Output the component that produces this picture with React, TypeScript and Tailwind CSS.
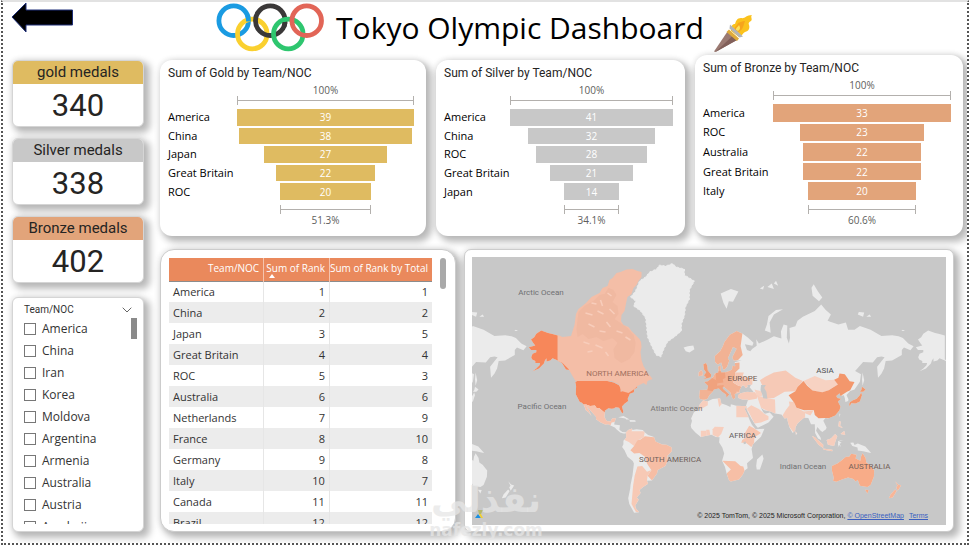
import React from "react";

const DIN = "font-[Roboto,'Liberation_Sans',sans-serif]";
const SEGOE = "font-['Open_Sans','Noto_Sans',sans-serif]";
const CARD_SHADOW = "shadow-[4px_4px_7px_2px_rgba(0,0,0,0.27),-1px_-1px_5px_1px_rgba(0,0,0,0.05)]";

/* ---------- Header artwork ---------- */

function Rings() {
  const ring = (cx: number, cy: number, stroke: string) => (
    <circle cx={cx} cy={cy} r="14.8" fill="none" stroke={stroke} strokeWidth="4.8" />
  );
  return (
    <svg className="h-[50px] w-[109px] shrink-0" viewBox="216 3 109 50" aria-label="Olympic rings" role="img">
      {ring(233.7, 21.7, "#1a9be2")}
      {ring(252.3, 35, "#fad02f")}
      {ring(270.3, 21.7, "#3a3838")}
      {ring(288.3, 35, "#2ec66f")}
      {ring(306.7, 21.7, "#e26557")}
      <path d="M247.500 16.500a14.800 14.800 0 0 1 1 6" fill="none" stroke="#1a9be2" strokeWidth="4.8" />
      <path d="M284 27.300a14.800 14.800 0 0 0 1 -4" fill="none" stroke="#3a3838" strokeWidth="4.8" />
    </svg>
  );
}

function Torch() {
  return (
    <svg className="h-[40px] w-[42px] shrink-0" viewBox="712 13 42 40" aria-label="Torch" role="img">
      <path
        d="M731 31c0-5 1-7 4-7 1-3 2-6 6-6 4 1 5-3 11-3-2 2 1 4-1 6-2 1-3 2-2 4 1 3 0 6-4 7-2 1-3 4-6 5z"
        fill="#fbc21d"
      />
      <path d="M734 30c1-4 3-4 4-7 3-1 4-2 7-2-1 2-1 4-2 6-1 3-3 4-5 5z" fill="#f6a51c" />
      <path d="M736 30c0-3 2-3 3-5 1 2 2 4-1 6z" fill="#fde35c" />
      <path d="M727.500 31.500 737 40 715.500 52 714 51.500z" fill="#9b7a72" />
      <path d="M732.500 36 737 40 715.500 52z" fill="#82605a" />
      <path d="M729 29.500 739 38.500 737 41 726.500 32z" fill="#e0ab3a" />
      <path d="M730 24.500 743 36.500 739.500 37.500 729.500 28.500z" fill="#b2b5b8" />
    </svg>
  );
}

/* ---------- KPI cards ---------- */

function Kpi({ label, value, tone }: { label: string; value: string; tone: string }) {
  return (
    <section className={`overflow-hidden rounded-[6px] border border-[#d5d5d5] bg-white text-center text-[#252423] ${CARD_SHADOW} ${DIN}`}>
      <h2 className={`h-[23px] text-[15px] leading-[22px] ${tone}`}>{label}</h2>
      <p className="h-[42px] text-[31px] leading-[44px]">{value}</p>
    </section>
  );
}

/* ---------- Slicer ---------- */

const TEAMS = ["America", "China", "Iran", "Korea", "Moldova", "Argentina", "Armenia", "Australia", "Austria", "Azerbaijan"];

function Slicer() {
  return (
    <section className={`flex min-h-0 flex-1 flex-col rounded-[6px] border border-[#d5d5d5] bg-white pb-[7px] pl-[11px] pr-[6px] pt-[4px] ${CARD_SHADOW}`}>
      <div className="flex h-[16px] items-center justify-between pr-[5px]">
        <h2 className={`text-[10px] leading-[16px] text-[#333] ${DIN}`}>Team/NOC</h2>
        <button type="button" aria-label="Slicer type" className="flex h-[12px] w-[10px] items-center">
          <svg viewBox="0 0 10 6" className="h-[6px] w-[10px]">
            <path d="M.7.7 5 5 9.300.7" fill="none" stroke="#555" strokeWidth="0.9" />
          </svg>
        </button>
      </div>
      <div className="flex min-h-0 flex-1 justify-between overflow-hidden">
        <ul className={`text-[12px] text-[#333] ${SEGOE}`}>
          {TEAMS.map((t) => (
            <li key={t} className="h-[22px]">
              <label className="flex h-[22px] items-center gap-[6px]">
                <input type="checkbox" className="h-[12px] w-[12px] appearance-none border border-[#777] bg-white checked:bg-[#555]" />
                {t}
              </label>
            </li>
          ))}
        </ul>
        <div className="h-[21px] w-[6px] bg-[#8a8a8a]" />
      </div>
    </section>
  );
}

/* ---------- Funnels ---------- */

type FunnelProps = {
  title: string;
  rows: [string, number][];
  last: string;
  bar: string;
  labels: string;
  body: string;
};

function Bracket({ width }: { width: number }) {
  return (
    <div className="mx-auto flex h-[9px] items-center border-x border-[#b3b0ad]" style={{ width: `${width}%` }}>
      <div className="h-px flex-1 bg-[#b3b0ad]" />
    </div>
  );
}

function Funnel({ title, rows, last, bar, labels, body }: FunnelProps) {
  const max = rows[0][1];
  const end = (rows[rows.length - 1][1] / max) * 100;
  return (
    <section className={`rounded-[12px] bg-white pb-[9px] pl-[8px] pr-[12px] pt-[5px] ${CARD_SHADOW}`}>
      <h2 className={`h-[16px] whitespace-nowrap text-[12px] leading-[16px] text-[#252423] ${DIN}`}>{title}</h2>
      <div className={`mt-[4px] flex text-[11px] ${SEGOE}`}>
        <ul className={`mt-[24px] flex shrink-0 flex-col gap-[2px] whitespace-nowrap text-black ${labels} ${body}`}>
          {rows.map(([name]) => (
            <li key={name} className="flex flex-1 items-center leading-[14px]">
              {name}
            </li>
          ))}
        </ul>
        <div className="min-w-0 flex-1 text-center text-[10px]">
          <p className="h-[11px] leading-[11px] text-[#605e5c]">100%</p>
          <Bracket width={100} />
          <ul className={`mt-[4px] flex flex-col gap-[2px] text-white ${body}`}>
            {rows.map(([name, v]) => (
              <li key={name} className={`mx-auto flex flex-1 items-center justify-center leading-[14px] ${bar}`} style={{ width: `${(v / max) * 100}%` }}>
                {v}
              </li>
            ))}
          </ul>
          <div className="h-[5px]" />
          <Bracket width={end} />
          <p className="h-[13px] leading-[13px] text-[#605e5c]">{last}</p>
        </div>
      </div>
    </section>
  );
}

/* ---------- Rank table ---------- */

const RANKS: [string, number, number][] = [
  ["America", 1, 1],
  ["China", 2, 2],
  ["Japan", 3, 5],
  ["Great Britain", 4, 4],
  ["ROC", 5, 3],
  ["Australia", 6, 6],
  ["Netherlands", 7, 9],
  ["France", 8, 10],
  ["Germany", 9, 8],
  ["Italy", 10, 7],
  ["Canada", 11, 11],
  ["Brazil", 12, 12],
];

function RankTable() {
  return (
    <section className={`flex min-h-0 justify-between overflow-hidden rounded-[14px] border border-[#ccc] bg-white pb-[7px] pl-[8px] pr-[9px] pt-[8px] ${CARD_SHADOW}`}>
      <div className="min-h-0 flex-1 overflow-hidden">
        <table className={`w-full table-fixed border-collapse text-[#333] ${SEGOE}`}>
          <colgroup>
            <col className="w-[36%]" />
            <col className="w-[25%]" />
            <col className="w-[39%]" />
          </colgroup>
          <thead>
            <tr className="h-[23px] border-b border-[#8c8c8c] bg-[#ea895c] text-right align-top text-[10px] text-white">
              <th scope="col" className="whitespace-nowrap border-r border-[#f5c4ad] pr-[4px] pt-[3px] font-medium leading-[14px]">Team/NOC</th>
              <th scope="col" className="relative whitespace-nowrap border-r border-[#f5c4ad] pr-[4px] pt-[3px] font-medium leading-[14px]">
                Sum of Rank
                <span className="absolute bottom-[3px] left-[5px] h-0 w-0 border-x-[3px] border-b-[4px] border-x-transparent border-b-white" />
              </th>
              <th scope="col" className="whitespace-nowrap pr-[4px] pt-[3px] font-medium leading-[14px]">Sum of Rank by Total</th>
            </tr>
          </thead>
          <tbody className="text-[11px] leading-[15px]">
            {RANKS.map(([team, rank, total], i) => (
              <tr key={team} className={`h-[21px] ${i % 2 ? "bg-[#ececec]" : "bg-white"}`}>
                <td className="border-r border-[#e6e6e6] pl-[4px]">{team}</td>
                <td className="border-r border-[#e6e6e6] pr-[4px] text-right">{rank}</td>
                <td className="pr-[4px] text-right">{total}</td>
              </tr>
            ))}
          </tbody>
        </table>
      </div>
      <div className="ml-[8px] h-[31px] w-[6px] shrink-0 rounded-full bg-[#a9a9a9]" />
    </section>
  );
}

/* ---------- World map (Web Mercator) ---------- */

const SCALE = 1.075;
const WORLD = 387;

const project = (lon: number, lat: number): string => {
  const y = Math.log(Math.tan(Math.PI / 4 + (lat * Math.PI) / 360)) * 61.6;
  return `${(709.9 + lon * SCALE).toFixed(1)} ${(441.6 - y).toFixed(1)}`;
};

const shape = (pts: number[]): string => {
  const out: string[] = [];
  for (let i = 0; i < pts.length; i += 2) out.push(project(pts[i], pts[i + 1]));
  return `M${out.join("L")}Z`;
};

const ALASKA = [-141, 69.7, -146, 70.2, -150, 70.5, -156.5, 71.3, -161, 70.3, -163, 69.2, -166, 68.4, -163.5, 67, -162, 66.3, -168, 65.6, -166, 64.5, -161, 64.5, -161, 63.6, -164.5, 63, -165.8, 61.5, -164.8, 60.4, -162, 59.8, -162, 58.8, -157.5, 58.8, -158, 57.7, -161, 56, -164.5, 54.6, -158.5, 56, -154, 58.5, -153, 60, -151.5, 61, -151.5, 59.5, -148, 60, -146, 61, -141, 60, -137, 58.7, -133.5, 55.5, -131, 55.2, -130, 56, -133.5, 58.5, -137, 59.6, -141, 60.4];

const USA = [-124.7, 48.4, -123, 49, -95, 49, -89, 48, -84.5, 46.5, -82.5, 45.3, -82.5, 42, -79, 43, -76, 44.5, -71.5, 45, -69, 47.3, -67, 45, -70, 43.5, -70.2, 41.7, -74, 40.6, -76, 37, -75.5, 35.2, -79, 33.2, -81.3, 31, -80, 26.5, -81, 25.2, -82.8, 28, -84, 30, -87, 30.4, -89.2, 29.5, -91, 29.2, -94, 29.6, -97.3, 27.5, -97.2, 25.9, -99.5, 27.5, -102.5, 29.7, -104.7, 29.6, -106.5, 31.8, -111, 31.3, -114.7, 32.6, -117.1, 32.5, -118.5, 34, -120.6, 34.6, -122.5, 37.5, -124.3, 40.3, -124, 46];

const MEXICO = [-117.1, 32.5, -114.7, 32.6, -111, 31.3, -106.5, 31.8, -104.7, 29.6, -102.5, 29.7, -99.5, 27.5, -97.2, 25.9, -97.7, 22.3, -95.5, 18.7, -92, 18.5, -90.5, 21, -87, 21.3, -88.2, 18, -91, 17.5, -92, 14.8, -94, 16, -97, 15.8, -101.5, 17.7, -105.5, 20.3, -105.5, 22.5, -109, 26, -112.8, 30, -114.7, 31.7, -112, 27.5, -109.7, 23.2, -112.2, 26, -115, 28, -116, 30.5];

const CENTRAL = [-91, 17.5, -88.2, 17.8, -88.6, 15.8, -83.3, 15, -83.7, 11, -81, 8.9, -77.5, 8.7, -78, 7.5, -80, 7.5, -83, 8.3, -86, 11, -88, 13, -92, 14.8];

const EURASIA = [-9, 37, -9.5, 38.7, -8.8, 43.2, -1.8, 43.4, -1.2, 46, -4.7, 48.4, -1.5, 48.7, 1.5, 50.2, 4, 51.8, 5, 53.3, 8.5, 54, 8.2, 57, 10.5, 57.6, 10.5, 55, 11, 54, 14, 54, 18.5, 54.7, 21, 55.5, 21.5, 57.5, 24, 57.2, 23.5, 59.2, 30, 60, 22.5, 60, 21.3, 61.5, 25.3, 65, 22, 65.7, 17.2, 61, 18.5, 60, 16.5, 57, 14.3, 55.5, 12.8, 55.5, 11, 59, 8, 58.1, 5.3, 59, 5, 62, 10, 64, 12.5, 66, 14, 67.5, 19, 70, 25.5, 71.1, 31, 70.3, 36, 69, 41, 67.3, 40, 66.2, 33, 66.7, 35, 64.5, 38, 64, 40, 65, 44, 66.2, 43.5, 68.5, 46, 67, 54, 68.3, 60, 69.5, 67, 68.8, 66.5, 71, 69, 73, 72.5, 72.7, 72, 69, 74, 67, 75, 69, 74.5, 72, 80, 72.5, 82, 74, 87, 75, 98, 76.3, 104, 77.7, 108, 76.6, 113, 75.5, 110, 74, 113, 73.7, 120, 73, 127, 73.5, 129, 71.5, 135, 71.5, 140, 72.6, 150, 71.5, 160, 69.6, 170, 69.8, 176, 69.5, 180, 68.9, 185, 67, 190, 66, 187, 64.4, 181, 65.5, 179, 64.5, 179, 62.5, 170, 60, 164, 59.8, 162.5, 56, 160, 53.2, 156.8, 51, 156, 57, 163, 61.5, 160, 61.8, 156, 61.5, 152, 59, 143, 59.3, 135.5, 54.7, 141, 53, 140, 48.5, 135, 43.5, 131, 42.5, 127.5, 39.8, 129.4, 36.5, 129, 35.2, 126.5, 34.5, 126, 37.5, 125, 39.5, 122, 39, 121, 41, 118, 39, 119, 37.5, 122.5, 37, 119.5, 35, 122, 31, 121, 28, 117, 23.5, 110.5, 21, 108, 21.5, 106, 19, 109, 13, 108.5, 11.5, 105, 8.8, 103, 10.5, 100.5, 13.5, 99.3, 10, 103.3, 4, 104, 1.4, 101, 2.8, 98.3, 8, 98, 16, 94.5, 16, 92, 21.5, 88, 21.7, 85.5, 19.8, 82, 16.5, 80, 13, 79.8, 10.3, 77.5, 8.1, 74.5, 13, 72.7, 19, 72.5, 21.5, 70, 21, 67, 24.5, 61, 25.2, 57, 27, 51, 28, 48, 30, 50, 26.5, 51.5, 25, 56.2, 26, 59.7, 22.5, 55, 17.5, 45, 12.8, 43, 15, 39, 21, 35, 28, 34, 31.3, 36, 36.5, 30.5, 36.5, 27, 37.5, 26.5, 39.5, 29, 41, 35, 42, 41.5, 41.5, 37.5, 45, 39, 47, 35, 46.3, 35.5, 45.2, 33.5, 44.5, 32.5, 46, 30.5, 46.2, 28, 43, 28, 41.5, 23.5, 40.5, 24, 38, 22.7, 36.5, 21, 38, 19.5, 41.5, 14, 45, 12.5, 45.3, 12.5, 44, 16, 41.7, 18.4, 40, 17, 39, 16, 38, 15.6, 40, 12, 42, 8.8, 44.4, 4, 43.5, 3.1, 42, 0, 39.5, -2, 36.8, -5.5, 36];

const AFRICA = [-5.9, 35.8, -2, 35, 3, 36.8, 10, 37.3, 11, 34, 10.5, 33.5, 15.5, 32.3, 19.5, 30.5, 20, 32.8, 25, 31.6, 31, 31.5, 34, 31.3, 33, 28.5, 35.5, 24, 37.2, 20, 39.5, 15.5, 43, 11.5, 51.2, 11.8, 48, 4.5, 40.5, -2.5, 39.3, -7, 40.6, -15, 35, -19.8, 35.5, -24, 32.8, -26, 31, -29.5, 27.5, -33.2, 20, -34.8, 18.3, -34, 16, -28.5, 14.5, -23, 11.8, -17.5, 13.8, -11, 12, -5.5, 9, -0.8, 9.5, 4, 6, 4.3, 2, 6.3, -4, 5.2, -8, 4.4, -13, 8.5, -16.8, 12.5, -17.4, 14.7, -16.2, 19, -17, 21, -14.5, 26, -10, 29.5, -9.5, 32];

const SOUTH_AMERICA = [-77.5, 8.7, -75.5, 10.8, -72, 12.2, -71.5, 10.8, -68, 11.5, -62, 10.7, -60, 8.5, -57, 6, -51.5, 4.3, -50, 0, -44, -2.7, -40, -2.9, -35.3, -5.2, -35, -9, -39, -13, -39, -18, -41, -22, -48, -25.5, -48.7, -28.5, -53.5, -34, -58, -34.2, -57, -36.5, -62, -39, -65, -41, -64, -43, -67.5, -46, -65.8, -47.5, -69, -51, -68.5, -52.5, -65.3, -54.8, -70, -55, -74.5, -50, -75.5, -46.5, -73.7, -40, -73.3, -37, -71.5, -30, -70.2, -20, -71.3, -17.7, -76.2, -14, -79, -8, -81.2, -5, -80, -2.5, -80, 0.8, -77.5, 3.5];

const AUSTRALIA = [114, -22, 114, -26, 115.7, -32, 115, -34.2, 118, -35, 124, -33, 129, -31.6, 134, -32.8, 136, -34.8, 138, -33.5, 140, -38, 144, -38.5, 147, -38.8, 150, -37.3, 153, -31, 153.3, -26, 149, -21, 146, -19, 145.3, -15, 142.5, -10.8, 141, -14, 140.5, -17.5, 136, -15.5, 136.8, -12.2, 132, -11.3, 130, -14, 127, -14, 122, -18, 119, -20];
const TASMANIA = [144.7, -40.8, 148.2, -40.9, 147, -43.5];
const NZ_NORTH = [172.8, -34.5, 175.5, -37, 178.4, -37.7, 175.2, -41.5, 173.8, -39.3, 175, -38];
const NZ_SOUTH = [172.7, -40.6, 174.2, -41.7, 170.5, -46, 167, -46.5, 168.5, -44];
const SUMATRA = [95.3, 5.5, 98, 4, 106, -3, 105.8, -5.9, 101.5, -3];
const JAVA = [105.3, -6.5, 114.5, -7.6, 114.3, -8.9, 106.5, -7.6];
const BORNEO = [109, 1.5, 113, 3, 117, 7, 119, 5, 117.5, 1, 116, -4, 110.2, -3];
const SULAWESI = [119.5, -5.5, 119.8, 0.5, 125, 1.5, 120.5, 0, 123, -1, 121, -2, 122.5, -5, 120.5, -3];
const NEW_GUINEA = [131, -1, 134, -0.8, 135, -3.3, 138, -1.7, 145, -4.5, 150.5, -10.5, 147, -9.8, 143, -9, 138, -8.3, 137.8, -5.5, 133, -4];
const LUZON = [120.5, 18.5, 122.2, 18.3, 121.7, 14.5, 124, 13, 123, 12.8, 120, 14.2];
const MINDANAO = [122, 7, 126.3, 6, 125.5, 9.8, 123.5, 8.5];
const HONSHU = [130, 33, 130.5, 31, 132, 33.5, 136, 33.3, 140, 35, 141.2, 38, 142, 39.5, 141.2, 41.4, 139.8, 39.5, 137, 37, 133, 35.6, 130.8, 34.4];
const HOKKAIDO = [140, 42, 143.2, 42, 145.3, 43.5, 142, 45.4, 141.3, 43.3];
const BRITAIN = [-5.5, 50, 1.3, 51.2, 1.7, 52.8, -1.5, 55, -2, 57.5, -3.2, 58.8, -5.7, 58.2, -5, 55.5, -3, 54, -4.5, 53, -5, 51.8, -3, 51.3];
const IRELAND = [-10, 51.8, -6.3, 52.2, -6, 54, -7.5, 55.2, -10, 54];

const ISLANDS: number[][] = [
  TASMANIA, NZ_NORTH, NZ_SOUTH, SUMATRA, JAVA, BORNEO, SULAWESI, NEW_GUINEA, LUZON, MINDANAO, HONSHU, HOKKAIDO, BRITAIN, IRELAND,
  [49.3, -12, 50.4, -15.8, 47, -25, 44, -25, 43.5, -22, 44.3, -16.5],
  [80, 9.5, 81.8, 7.5, 80.5, 6],
  [121, 25.2, 121.9, 24.8, 120.7, 22],
  [142.5, 54, 144, 49.5, 142.5, 46, 142, 50],
  [51.5, 71.3, 57, 70.6, 56, 73.5, 60, 75.5, 68.5, 76.7, 62, 76.5, 55, 75.2, 53.5, 73],
  [10.5, 79.7, 13, 78, 16, 76.8, 18, 78.3, 22, 78.2, 27, 80, 20, 80.4],
  [96, 79.3, 95, 80.6, 97, 81.1, 101, 80, 105, 79, 102, 78.3],
  [47, 80.5, 50, 80.3, 51, 80.9],
  [54, 80.7, 60, 80.4, 58, 81.2],
  [60, 81.2, 64, 80.9, 62, 81.6],
  [138, 75.5, 143, 75, 144, 76, 139, 76.1],
  [146, 75, 150.5, 75, 149, 75.5],
  [178.5, 71.1, 182, 71.1, 180, 71.5],
  [-24, 65.5, -22, 64, -18.5, 63.5, -14, 64.8, -15, 66.3, -20, 66],
  [-84.8, 22, -80, 23.1, -74.2, 20.2, -77.5, 20, -78, 21],
  [-74.3, 19.8, -69, 19.5, -68.5, 18.2, -74, 18.2],
];

const LAND = [ALASKA, USA, MEXICO, CENTRAL, EURASIA, AFRICA, SOUTH_AMERICA, AUSTRALIA, ...ISLANDS].map(shape).join("");
const CASPIAN = shape([48, 46.5, 52.5, 46.5, 51, 44.5, 53, 42, 54, 37, 50, 37.3, 49, 40.5, 47.5, 43]);
const VICTORIA = shape([31.7, -0.5, 34, 0, 34, -2, 32, -2.5]);

const CANADA =
  "M558.3 335L563 337 571.500 336 575 325 576.500 314 579 309 586.500 303 592 297 600 293 603 288 608 286 610 280 613 278 617 273 621 272 627 269.500 633 269 638 271 642 272 642 277 639 281 637 285 634 288 632 294 628 297 627 301 626 306 625 311 622 315 621.500 321 624 325 629 327 632 331 636 335 640 339 641.500 342 642 347 641 352 642 360 644 366 647 371 653 379 648 381 647 385 644 383 638 386 635 389 629 393 622 391 619 384 612 381 576 381 573 376 569 369 563 363 558.300 361Z";
const GREENLAND =
  "M631 297L636 291 640 281 646 277 650 272 657 269 660 265 666 266 673 263.500 677 267 685 269 685 275 695 281 690 290 690 299 686 307 685 316 682 324 682 331 675 337 668 342 664 350 661.500 357 656.500 355 652 346 648 337 647 327 646 318 641 311 634 306 636 301Z";

/* Countries shaded by medals; coarse borders, trimmed to the coastline. */
const SHADED: [string, number[]][] = [
  ["#f2b294", [-12, 35.8, -12, 44.5, -6, 49.5, 2, 51.5, 6, 58, 3, 63, 12, 69, 24, 73, 31, 71, 29, 66, 31, 62.5, 27, 60.3, 20, 58.5, 28, 59, 28, 56, 24, 54, 24, 50.5, 22, 48, 27, 46, 30, 45.5, 28, 41, 25, 35, 14, 36, 8, 43, -1, 36]],
  ["#f6c9b6", [24, 54, 32, 54, 31, 52, 40, 50, 40, 47, 33, 44, 29, 45.5, 27, 46, 22, 48, 24, 50.5]],
  ["#f0a27e", [6, 54.8, 14.5, 54.5, 15, 51, 12.5, 50, 13, 48, 7.5, 47.6, 6, 50]],
  ["#f0a27e", [-2, 43, -5, 48.8, 2, 51, 8, 49, 7, 46, 7.5, 43.8, 3, 42.4]],
  ["#f0a27e", [7, 46, 13.5, 46.5, 12.5, 44.5, 19, 40, 16, 37.5, 10, 42, 7.5, 43.8]],
  ["#f6cbb9", [25, 42, 42, 41.8, 44.8, 39.5, 44, 37, 36, 35.8, 26, 36]],
  ["#f7d2c2", [42, 43.5, 50, 42, 48.5, 38.5, 44, 39]],
  ["#f6c9b6", [47, 49.5, 52, 51.5, 60, 54, 71, 55, 80, 51, 87, 49, 82, 45.3, 80, 42.3, 70, 42, 60, 37.5, 53, 37, 50, 45]],
  ["#f7cebd", [44, 39.5, 48, 38.5, 54, 37.3, 61, 36.5, 61.5, 25, 56, 26.5, 48, 30]],
  ["#f7cebd", [35, 29.5, 39, 32, 46, 29, 51, 25, 55, 23, 55, 20, 48, 17.5, 42, 16.5]],
  ["#f6cdbb", [68, 23.5, 71, 28, 74.5, 32, 74, 35, 79, 34.5, 81, 30, 88, 27, 97, 28, 94, 23.5, 89, 25.5, 89, 21, 80, 6, 71, 18]],
  ["#f7d2c2", [87.5, 49, 98, 52, 108, 49.5, 116, 49.8, 119.5, 46.8, 111, 43, 105, 41.7, 96, 42.8]],
  ["#f3976c", [73.7, 39.5, 80, 42.3, 82, 45.3, 87.5, 49, 91, 46, 96, 42.8, 105, 41.7, 111, 43, 119.5, 46.8, 116, 49.8, 120, 51, 121, 53.4, 126, 53, 130.5, 48.8, 135, 48.4, 131, 43, 128, 42, 123, 39.5, 123, 30, 117, 20, 108, 21.5, 101.5, 21.2, 98, 24, 97, 28.2, 88, 28, 81, 30, 79, 34]],
  ["#f7cebd", [25, 32, 34.5, 31.5, 37, 22, 25, 22]],
  ["#f7cebd", [-10, 29, -10, 34, -5.5, 36.5, -1.5, 35.3, -1.5, 32, -8.5, 28.7]],
  ["#f7cebd", [7.5, 37.5, 11.5, 37.5, 11.5, 33, 9, 30.5]],
  ["#f7cebd", [3, 6, 3, 11.5, 5, 13.7, 13.5, 13.5, 11, 7, 8, 4]],
  ["#f7cebd", [-3, 4.5, -3, 11, 0, 11, 1, 5]],
  ["#f7cebd", [-8, 4, -8, 10, -3, 10, -3, 4]],
  ["#f7c6b1", [33, 8, 37, 14.5, 42, 12, 48, 8, 42, 4, 41.5, -2, 39, -5, 34, -1, 29.6, -1, 30.5, 1.5, 34, 4]],
  ["#f7bfa6", [16, -28.5, 20, -25, 12, -17.5, 24, -18, 29, -22, 31.5, -22.5, 33, -27, 28, -34, 18, -36]],
  ["#f6bda4", [-60, 5, -52, 4, -50, 5, -33, -5, -38, -24, -53.4, -34, -57.5, -30.2, -54, -25.7, -58, -20, -60, -14, -65, -10.5, -70, -11, -73.5, -8, -70, -4.2, -70, 1, -64, 2]],
  ["#f7cebd", [-79, 1.5, -77, 12, -71, 13, -72.5, 9.5, -60, 9.5, -61, 4, -67, 1, -70, -4.2, -75, -0.3]],
  ["#f7c9b5", [-67, -22.5, -62.5, -22, -58, -27, -54, -25.6, -57.5, -30.2, -58, -34, -55, -38, -62, -48, -64, -55, -68.5, -54.5, -72.5, -50, -71, -38, -69.5, -30]],
];

const WHOLE: [string, number[]][] = [
  ["#f7875a", ALASKA],
  ["#f7875a", USA],
  ["#f7c3ae", MEXICO],
  ["#f8ac88", AUSTRALIA],
  ["#f8ac88", TASMANIA],
  ["#f8b597", NZ_NORTH],
  ["#f8b597", NZ_SOUTH],
  ["#f3976c", HONSHU],
  ["#f3976c", HOKKAIDO],
  ["#f19c75", BRITAIN],
  ["#f3b79e", IRELAND],
  ["#f7c9b5", SUMATRA],
  ["#f7c9b5", JAVA],
  ["#f7cebd", BORNEO],
  ["#f7cebd", LUZON],
  ["#f7cebd", MINDANAO],
];

const LABELS: [string, number, number, string][] = [
  ["Arctic Ocean", 541.5, 295, "#6f7073"],
  ["NORTH AMERICA", 618, 376, "#a0705f"],
  ["Pacific Ocean", 542.5, 409, "#6f7073"],
  ["Atlantic Ocean", 677, 411, "#7b7675"],
  ["SOUTH AMERICA", 670.5, 462, "#6f5f5a"],
  ["EUROPE", 743, 381, "#735b50"],
  ["ASIA", 825.5, 373, "#505153"],
  ["AFRICA", 743, 438, "#65615f"],
  ["Indian Ocean", 803.5, 469, "#6f7073"],
  ["AUSTRALIA", 870, 469, "#755f57"],
];

function WorldMap() {
  return (
    <section className={`relative min-h-0 overflow-hidden rounded-[7px] border border-[#ccc] bg-white px-[7px] pb-[6px] pt-[7px] ${CARD_SHADOW}`}>
      <div className="relative h-full w-full overflow-hidden bg-[#c8c8c8]">
        <svg className="h-full w-full" viewBox="472 257 475 268" preserveAspectRatio="xMidYMid slice" role="img" aria-label="Medals by country">
          <defs>
            <clipPath id="coast">
              <path d={LAND} />
            </clipPath>
          </defs>
          <g fill="#ebebeb">
            {[-WORLD, 0, WORLD].map((dx) => (
              <path key={dx} d={LAND} transform={`translate(${dx} 0)`} />
            ))}
            <path d={GREENLAND} stroke="#ebebeb" strokeWidth="1" strokeDasharray="2 2" />
          </g>
          <g clipPath="url(#coast)">
            {SHADED.map(([fill, pts], i) => (
              <path key={i} d={shape(pts)} fill={fill} />
            ))}
          </g>
          {WHOLE.map(([fill, pts], i) => (
            <path key={i} d={shape(pts)} fill={fill} />
          ))}
          <path d={CANADA} fill="#f4bea7" />
          <path
            d="M579 312l6-6 9-5 6-6 5-1 4-6 5 2 3 5-4 7 5 4 1 8-4 5 6 4 7 5 6 7 2 8-1 9-5 7-8 4-7-5-1-9 4-6-5-5-9 3-7-4-8 2-6-5-5 3-1-8z"
            fill="#edb49d"
            opacity="0.55"
          />
          <path
            d="M592 303l5 1M601 300l2 6M608 293l4 3M586 313l7 2M598 311l6 3M610 309l5 5M607 322l4 5M589 324l6 3M600 331l6 1M584 342l6 2M596 345l7 3M588 352l5-1M606 352l3 4M617 331l6 2M626 337l5 3"
            fill="none"
            stroke="#f8cdbb"
            strokeWidth="1.5"
          />
          <g fill="#c8c8c8">
            <path d={CASPIAN} />
            <path d={VICTORIA} />
          </g>
          <g className={DIN} fontSize="8" textAnchor="middle">
            {LABELS.map(([text, x, y, fill]) => (
              <text key={text} x={x} y={y} fill={fill}>
                {text}
              </text>
            ))}
          </g>
        </svg>
        <svg className="absolute bottom-[6px] left-[3px] h-[9px] w-[9px]" viewBox="0 0 9 9" aria-hidden="true">
          <path d="M3 0h5L6 4H4z" fill="#b5b86a" />
          <path d="M0 8 3 4l3 4z" fill="#1c8fe0" />
          <path d="M4 4h2l2 4H6z" fill="#f3cf2f" />
        </svg>
        <p className="absolute bottom-[4px] right-[18px] whitespace-nowrap font-['Liberation_Sans',Arial,sans-serif] text-[7px] leading-[10px] text-[#222]">
          © 2025 TomTom, © 2025 Microsoft Corporation,{" "}
          <a href="#osm" className="text-[#3b5fc0] underline">© OpenStreetMap</a>
          <a href="#terms" className="ml-[5px] text-[#3b5fc0] underline">Terms</a>
        </p>
      </div>
    </section>
  );
}

/* ---------- Page ---------- */

export default function App() {
  return (
    <div className="h-screen bg-white pb-px pl-px">
      <div className="relative flex h-full flex-col overflow-hidden border-2 border-dotted border-[#555] border-t-[#e2e2e2] [border-top-style:solid]">
        <header className="grid h-[53px] shrink-0 grid-cols-[1fr_auto_1fr]">
          <button type="button" aria-label="Back" className="ml-[8px] h-[31px] w-[63px]">
            <svg viewBox="0 0 63 31" className="h-full w-full">
              <path d="M1 15 15 1v7h46.500v15H15v7z" fill="#000" stroke="#1f2f78" strokeWidth="1" />
            </svg>
          </button>
          <div className="flex items-start">
            <Rings />
            <h1 className={`pl-[11px] pr-[8px] pt-[5px] text-[30px] leading-[42px] text-black ${SEGOE}`}>Tokyo Olympic Dashboard</h1>
            <div className="pt-[11px]">
              <Torch />
            </div>
          </div>
        </header>

        <div className="flex min-h-0 flex-1 gap-[16px] pb-[11px] pl-[9px] pr-[4px]">
          <aside className="flex w-[132px] shrink-0 flex-col gap-[14px] pt-[5px]">
            <div className="flex flex-col gap-[11px]">
              <Kpi label="gold medals" value="340" tone="bg-[#dfbb61]" />
              <Kpi label="Silver medals" value="338" tone="bg-[#c8c8c8]" />
              <Kpi label="Bronze medals" value="402" tone="bg-[#e2a47a]" />
            </div>
            <Slicer />
          </aside>

          <main className="flex min-w-0 flex-1 flex-col gap-[13px]">
            <div className="grid shrink-0 grid-cols-[266fr_249fr_268fr] items-end gap-[10px]">
              <Funnel
                title="Sum of Gold by Team/NOC"
                rows={[["America", 39], ["China", 38], ["Japan", 27], ["Great Britain", 22], ["ROC", 20]]}
                last="51.3%"
                bar="bg-[#dfbb61]"
                labels="w-[69px]"
                body="h-[91px]"
              />
              <Funnel
                title="Sum of Silver by Team/NOC"
                rows={[["America", 41], ["China", 32], ["ROC", 28], ["Great Britain", 21], ["Japan", 14]]}
                last="34.1%"
                bar="bg-[#c8c8c8]"
                labels="w-[66px]"
                body="h-[91px]"
              />
              <Funnel
                title="Sum of Bronze by Team/NOC"
                rows={[["America", 33], ["ROC", 23], ["Australia", 22], ["Great Britain", 22], ["Italy", 20]]}
                last="60.6%"
                bar="bg-[#e2a47a]"
                labels="w-[70px]"
                body="h-[96px]"
              />
            </div>
            <div className="mr-[9px] grid min-h-0 flex-1 grid-cols-[296fr_490fr] grid-rows-[minmax(0,1fr)] gap-[8px]">
              <RankTable />
              <WorldMap />
            </div>
          </main>
        </div>

        <div className="pointer-events-none absolute bottom-[2px] left-[424px] w-[118px] text-center font-['DejaVu_Sans',sans-serif] font-bold text-[#e6e6e6]/75">
          <p dir="rtl" className="text-[36px] leading-[38px]">نفذلي</p>
          <p className="text-[17px] leading-[22px]">nafezly.com</p>
        </div>
      </div>
    </div>
  );
}
